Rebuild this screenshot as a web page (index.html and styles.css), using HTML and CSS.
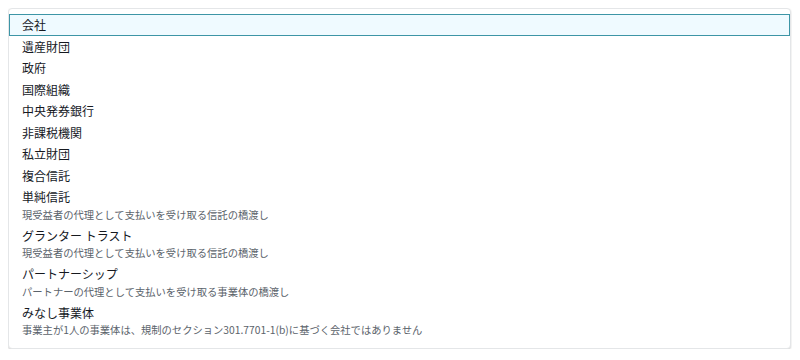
FILE: index.html
```html
<!DOCTYPE html>
<html lang="ja">
<head>
    <meta charset="UTF-8">
    <meta name="viewport" content="width=device-width, initial-scale=1.0">
    <title>事業体の種類</title>
    <link rel="stylesheet" href="styles.css">
</head>
<body>
    <ul class="dropdown" id="entityList">
        <li class="option active"><span class="label">会社</span></li>
        <li class="option"><span class="label">遺産財団</span></li>
        <li class="option"><span class="label">政府</span></li>
        <li class="option"><span class="label">国際組織</span></li>
        <li class="option"><span class="label">中央発券銀行</span></li>
        <li class="option"><span class="label">非課税機関</span></li>
        <li class="option"><span class="label">私立財団</span></li>
        <li class="option"><span class="label">複合信託</span></li>
        <li class="option">
            <span class="label">単純信託</span>
            <span class="desc">現受益者の代理として支払いを受け取る信託の橋渡し</span>
        </li>
        <li class="option">
            <span class="label">グランター トラスト</span>
            <span class="desc">現受益者の代理として支払いを受け取る信託の橋渡し</span>
        </li>
        <li class="option">
            <span class="label">パートナーシップ</span>
            <span class="desc">パートナーの代理として支払いを受け取る事業体の橋渡し</span>
        </li>
        <li class="option">
            <span class="label">みなし事業体</span>
            <span class="desc">事業主が1人の事業体は、規制のセクション301.7701-1(b)に基づく会社ではありません</span>
        </li>
    </ul>
</body>
</html>
```

FILE: styles.css
```css
body {
    margin: 8px;
    background-color: #ffffff;
    font-family: "Noto Sans CJK JP", "Noto Sans", "Liberation Sans", sans-serif;
}

.dropdown {
    list-style: none;
    margin: 0;
    padding: 5px 0 8px;
    width: 783px;
    box-sizing: border-box;
    background-color: #ffffff;
    border: 1px solid #e4e6e8;
    border-radius: 4px;
    box-shadow: 0 1px 2px rgba(0, 0, 0, 0.18);
}

.option {
    display: flex;
    flex-direction: column;
    padding: 1px 12px;
    border: 1px solid transparent;
    cursor: pointer;
}

.option.active {
    background-color: #effaff;
    border-color: #3d95a6;
}

.label {
    font-size: 12px;
    line-height: 17.5px;
    color: #16191f;
}

.desc {
    font-size: 10.3px;
    line-height: 17px;
    color: #5b636b;
}
```
